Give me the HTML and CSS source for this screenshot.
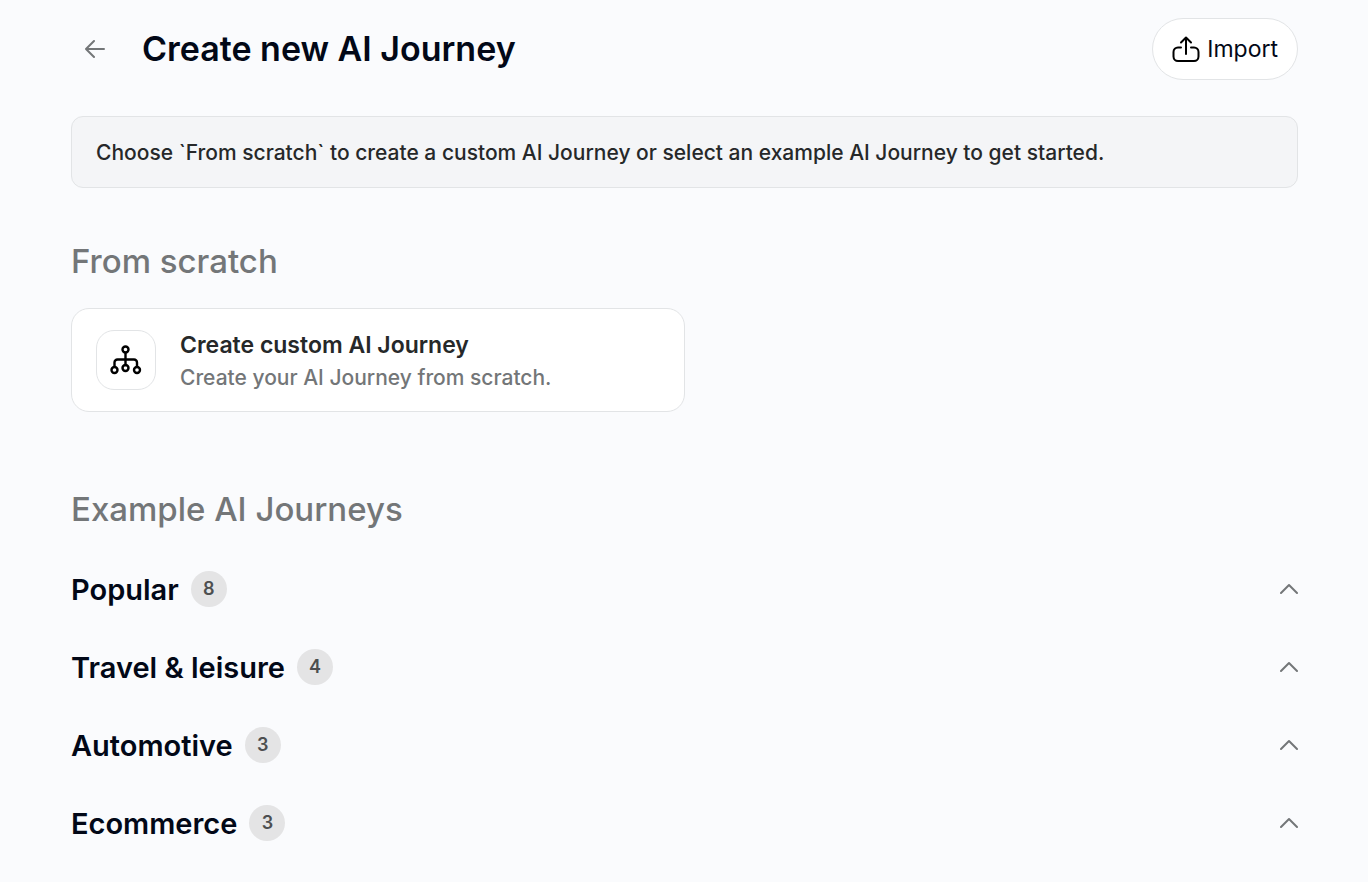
FILE: index.html
```html
<!DOCTYPE html>
<html lang="en">
<head>
    <meta charset="UTF-8">
    <meta name="viewport" content="width=device-width, initial-scale=1.0">
    <title>Create new AI Journey</title>
    <link rel="stylesheet" href="styles.css">
</head>
<body>
    <main class="page">
        <header class="header">
            <a href="#" class="back-link" aria-label="Back">
                <svg width="20" height="20" viewBox="0 0 20 20"><path d="M19 10H1M9 2L1 10l8 8"/></svg>
            </a>
            <h1>Create new AI Journey</h1>
            <button type="button" class="import-btn">
                <svg width="28" height="28" viewBox="0 0 28 28"><path d="M9 12.500H6a4.500 4.500 0 0 0-4.500 4.500v4.500A4.500 4.500 0 0 0 6 26h16a4.500 4.500 0 0 0 4.500-4.500V17a4.500 4.500 0 0 0-4.500-4.500H19M14 19V2.500M9 7.500l5-5 5 5"/></svg>
                Import
            </button>
        </header>

        <p class="notice">Choose `From scratch` to create a custom AI Journey or select an example AI Journey to get started.</p>

        <section class="scratch">
            <h2>From scratch</h2>
            <a href="#" class="card">
                <span class="card-icon">
                    <svg width="32" height="32" viewBox="0 0 32 32">
                        <circle cx="15.500" cy="5.500" r="3"/>
                        <circle cx="4.500" cy="26" r="3"/>
                        <circle cx="15.500" cy="24" r="3"/>
                        <circle cx="27" cy="26" r="3"/>
                        <path d="M15.500 9v12M4.500 22.500V18.500a3 3 0 0 1 3-3h16.500a3 3 0 0 1 3 3v4"/>
                    </svg>
                </span>
                <span class="card-text">
                    <span class="card-title">Create custom AI Journey</span>
                    <span class="card-desc">Create your AI Journey from scratch.</span>
                </span>
            </a>
        </section>

        <section class="examples">
            <h2>Example AI Journeys</h2>
            <button type="button" class="group">
                <span class="group-name">Popular</span>
                <span class="count">8</span>
                <svg class="chevron" width="18" height="12" viewBox="0 0 18 12"><path d="M1 10l8-8 8 8"/></svg>
            </button>
            <button type="button" class="group">
                <span class="group-name">Travel &amp; leisure</span>
                <span class="count">4</span>
                <svg class="chevron" width="18" height="12" viewBox="0 0 18 12"><path d="M1 10l8-8 8 8"/></svg>
            </button>
            <button type="button" class="group">
                <span class="group-name">Automotive</span>
                <span class="count">3</span>
                <svg class="chevron" width="18" height="12" viewBox="0 0 18 12"><path d="M1 10l8-8 8 8"/></svg>
            </button>
            <button type="button" class="group">
                <span class="group-name">Ecommerce</span>
                <span class="count">3</span>
                <svg class="chevron" width="18" height="12" viewBox="0 0 18 12"><path d="M1 10l8-8 8 8"/></svg>
            </button>
        </section>
    </main>
</body>
</html>
```

FILE: styles.css
```css
* {
    margin: 0;
    padding: 0;
    box-sizing: border-box;
    font-family: Inter, sans-serif;
}
body {
    background: #fafbfd;
    color: #020817;
}
svg {
    display: block;
    flex-shrink: 0;
    fill: none;
    stroke: currentColor;
    stroke-width: 2;
    stroke-linecap: round;
    stroke-linejoin: round;
}
.page {
    padding: 18px 70px 20px 71px;
}
.header {
    display: flex;
    align-items: center;
    margin-bottom: 36px;
}
.back-link {
    padding: 14px;
    margin-right: 23px;
    color: #737678;
}
h1 {
    font-size: 34px;
    font-weight: 600;
    line-height: 44px;
}
.import-btn {
    display: flex;
    align-items: center;
    gap: 7px;
    height: 62px;
    margin-left: auto;
    padding: 0 19px;
    border: 1px solid #e2e4e6;
    border-radius: 31px;
    background: white;
    color: #020817;
    font-size: 23px;
    cursor: pointer;
}
.import-btn svg {
    color: black;
}
.notice {
    padding: 21px 24px 19px;
    margin-bottom: 48px;
    border: 1px solid #e2e4e6;
    border-radius: 12px;
    background: #f4f5f7;
    color: #262829;
    font-size: 21px;
    font-weight: 500;
    line-height: 30px;
}
h2 {
    margin-bottom: 22px;
    color: #737678;
    font-size: 33px;
    font-weight: 500;
    line-height: 50px;
}
.scratch {
    margin-bottom: 72px;
}
.card {
    display: flex;
    align-items: center;
    gap: 24px;
    width: 50%;
    padding: 18px 24px;
    border: 1px solid #e2e4e6;
    border-radius: 18px;
    background: white;
    text-decoration: none;
}
.card-icon {
    display: flex;
    align-items: center;
    justify-content: center;
    width: 60px;
    height: 60px;
    border: 1px solid #e2e4e6;
    border-radius: 18px;
    color: black;
}
.card-icon svg {
    stroke-width: 2.4;
}
.card-text {
    display: flex;
    flex-direction: column;
}
.card-title {
    color: #262829;
    font-size: 23px;
    font-weight: 600;
    line-height: 36px;
}
.card-desc {
    color: #737678;
    font-size: 21px;
    font-weight: 500;
    line-height: 30px;
}
.examples h2 {
    margin-bottom: 16px;
}
.group {
    display: flex;
    align-items: center;
    gap: 12px;
    width: 100%;
    height: 78px;
    border: none;
    background: none;
    color: #020817;
    cursor: pointer;
}
.group-name {
    font-size: 29px;
    font-weight: 600;
}
.count {
    width: 36px;
    height: 36px;
    border-radius: 50%;
    background: #e4e4e5;
    color: #4d4f50;
    font-size: 18px;
    font-weight: 600;
    line-height: 36px;
}
.chevron {
    margin-left: auto;
    color: #737678;
}
```
